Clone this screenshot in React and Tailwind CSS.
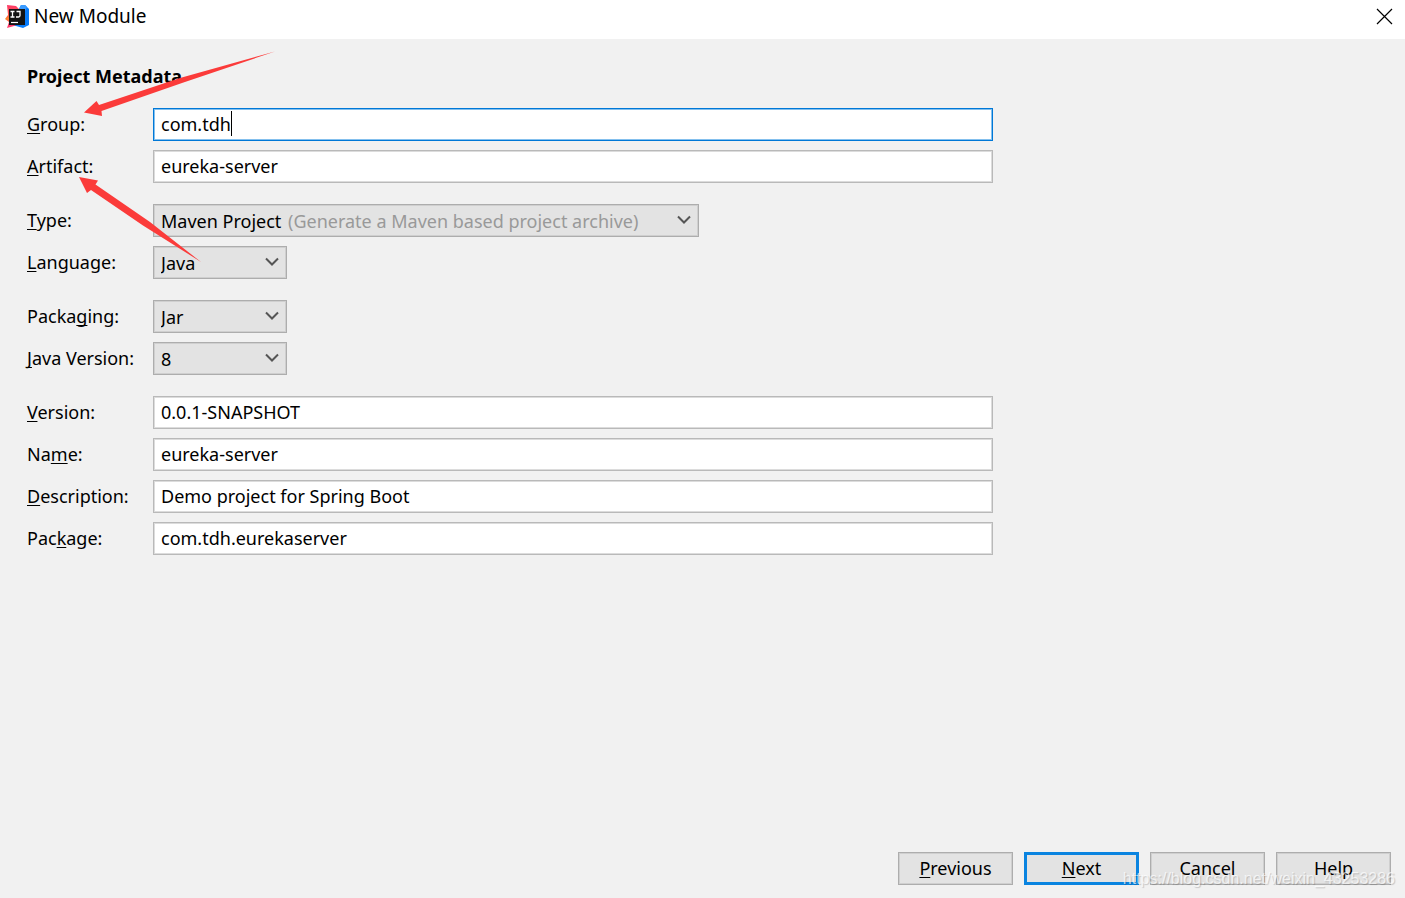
import { useState } from "react";

const inputStyle =
  "h-[33px] w-full border bg-white px-[7px] pb-[2px] text-black outline-none";
const plainBorder =
  "border-[#b9b9b9] shadow-[inset_0_0_0_1px_#dcdcdc]";
const activeBorder =
  "border-[#0078d7] shadow-[inset_0_0_0_1px_#84c0ee]";

function Mnemonic({ text, at }) {
  return (
    <span>
      {text.slice(0, at)}
      <span className="underline decoration-1 underline-offset-2 [text-decoration-skip-ink:none]">
        {text[at]}
      </span>
      {text.slice(at + 1)}
    </span>
  );
}

function Row({ id, label, at, children }) {
  return (
    <div className="flex items-center">
      <label htmlFor={id} className="w-[126px] shrink-0 whitespace-nowrap">
        <Mnemonic text={label} at={at} />
      </label>
      <div className="min-w-0 grow">{children}</div>
    </div>
  );
}

function TextRow({ id, label, at, value, active }) {
  const [text, setText] = useState(value);
  return (
    <Row id={id} label={label} at={at}>
      <div className="relative">
        <input
          id={id}
          type="text"
          value={text}
          onChange={(e) => setText(e.target.value)}
          className={`${inputStyle} ${active ? activeBorder : plainBorder}`}
        />
        {active && (
          <span className="pointer-events-none absolute top-[3px] left-[78px] h-[25px] w-px bg-black" />
        )}
      </div>
    </Row>
  );
}

function SelectRow({ id, label, at, options, hint, wide }) {
  return (
    <Row id={id} label={label} at={at}>
      <div className={`relative ${wide ? "max-w-[546px]" : "max-w-[134px]"}`}>
        <select
          id={id}
          className="h-[33px] w-full appearance-none border border-[#adadad] bg-[#e3e3e3] px-[7px] pt-[2px] shadow-[inset_0_0_0_1px_#cfcfcf] outline-none"
        >
          {options.map((o) => (
            <option key={o}>{o}</option>
          ))}
        </select>
        {hint && (
          <span className="pointer-events-none absolute inset-y-0 left-[135px] flex items-center pt-[2px] whitespace-nowrap text-[#999999]">
            {hint}
          </span>
        )}
        <svg
          className="pointer-events-none absolute top-[11px] right-2 h-[10px] w-[14px]"
          viewBox="0 0 14 10"
          fill="none"
          stroke="#555555"
          strokeWidth="2"
        >
          <path d="M1 1.500 L7 7.500 L13 1.500" />
        </svg>
      </div>
    </Row>
  );
}

function DialogButton({ primary, children }) {
  return (
    <button
      type="button"
      className={`flex h-[33px] w-[115px] items-center justify-center bg-[#e3e3e3] ${
        primary
          ? "border-[3px] border-[#0a84e0]"
          : "border border-[#adadad] shadow-[inset_0_0_0_1px_#cfcfcf]"
      }`}
    >
      {children}
    </button>
  );
}

function Logo() {
  return (
    <svg className="size-6" viewBox="0 0 24 24" aria-hidden="true">
      <defs>
        <linearGradient id="logo-pink" x1="0" y1="0" x2="0" y2="1">
          <stop offset="0" stopColor="#fe3a6a" />
          <stop offset="0.45" stopColor="#fd5a4a" />
          <stop offset="0.6" stopColor="#fc8a2d" />
          <stop offset="0.8" stopColor="#fe3a6a" />
        </linearGradient>
      </defs>
      <path d="M2 0 L11 1 L14 4 L12 21 L9 21 L2 23 L4 17 L0 14 L3 10 Z" fill="url(#logo-pink)" />
      <path d="M14 4 L16 0 L20 0 L24 4 L24 20 L18 23 L11 21 L9 20 Z" fill="#087cfa" />
      <path d="M14 4 L16 0 L20 0 L22 2 L20 6 Z" fill="#3a9bff" />
      <rect x="4" y="4" width="16" height="16" fill="#141414" />
      <path
        d="M5.500 6.500 H9.500 M7.500 6.500 V12 M5.500 12 H9.500 M11.500 6.500 H15 V10.500 Q15 12 13.500 12 H11"
        fill="none"
        stroke="#ffffff"
        strokeWidth="1.300"
      />
      <path d="M6 17.500 H13" stroke="#ffffff" strokeWidth="1.200" />
    </svg>
  );
}

export default function App() {
  return (
    <div className="relative flex min-h-screen flex-col bg-[#f1f1f1] font-['Noto_Sans','Noto_Sans_CJK_SC',sans-serif] text-[18px] leading-[25px] text-black">
      <header className="flex h-[39px] items-start justify-between bg-white pl-[5px]">
        <div className="flex items-center gap-[5px] pt-[4px]">
          <Logo />
          <h1 className="text-[19px]">New Module</h1>
        </div>
        <button type="button" aria-label="Close" className="px-3 py-2">
          <svg className="size-[17px]" viewBox="0 0 17 17" stroke="#000" strokeWidth="1.200">
            <path d="M1 1 L16 16 M16 1 L1 16" />
          </svg>
        </button>
      </header>

      <main className="flex grow flex-col px-[27px] pt-[25px]">
        <h2 className="font-bold">Project Metadata</h2>
        <form className="mt-[19px] flex max-w-[966px] flex-col gap-[21px]">
          <div className="flex flex-col gap-[9px]">
            <TextRow id="group" label="Group:" at={0} value="com.tdh" active />
            <TextRow id="artifact" label="Artifact:" at={0} value="eureka-server" />
          </div>
          <div className="flex flex-col gap-[9px]">
            <SelectRow
              id="type"
              label="Type:"
              at={0}
              options={["Maven Project"]}
              hint="(Generate a Maven based project archive)"
              wide
            />
            <SelectRow id="language" label="Language:" at={0} options={["Java"]} />
          </div>
          <div className="flex flex-col gap-[9px]">
            <SelectRow id="packaging" label="Packaging:" at={5} options={["Jar"]} />
            <SelectRow id="java-version" label="Java Version:" at={0} options={["8"]} />
          </div>
          <div className="flex flex-col gap-[9px]">
            <TextRow id="version" label="Version:" at={0} value="0.0.1-SNAPSHOT" />
            <TextRow id="name" label="Name:" at={2} value="eureka-server" />
            <TextRow id="description" label="Description:" at={0} value="Demo project for Spring Boot" />
            <TextRow id="package" label="Package:" at={3} value="com.tdh.eurekaserver" />
          </div>
        </form>
      </main>

      <footer className="flex justify-end gap-[11px] px-[14px] pb-[13px]">
        <DialogButton>
          <Mnemonic text="Previous" at={0} />
        </DialogButton>
        <DialogButton primary>
          <Mnemonic text="Next" at={0} />
        </DialogButton>
        <DialogButton>Cancel</DialogButton>
        <DialogButton>Help</DialogButton>
      </footer>

      <svg
        className="pointer-events-none absolute top-[50px] left-[75px] h-[220px] w-[205px]"
        viewBox="75 50 205 220"
        fill="#fb3b3a"
        aria-hidden="true"
      >
        <path d="M84 112.500 L96.500 101 L99 105 L180 78 L275 51.500 L182 83 L101.500 111 L102 116 Z" />
        <path d="M79 177 L98 180.500 L95.500 184.500 L150 222 L201 262 L143 225.500 L91 190 L87 193 Z" />
      </svg>

      <p className="pointer-events-none absolute right-[10px] bottom-[8px] font-['Liberation_Sans',sans-serif] text-[16px] leading-[22px] text-white/70 [text-shadow:1px_1px_1px_rgba(0,0,0,0.18)]">
        https://blog.csdn.net/weixin_43253286
      </p>
    </div>
  );
}
